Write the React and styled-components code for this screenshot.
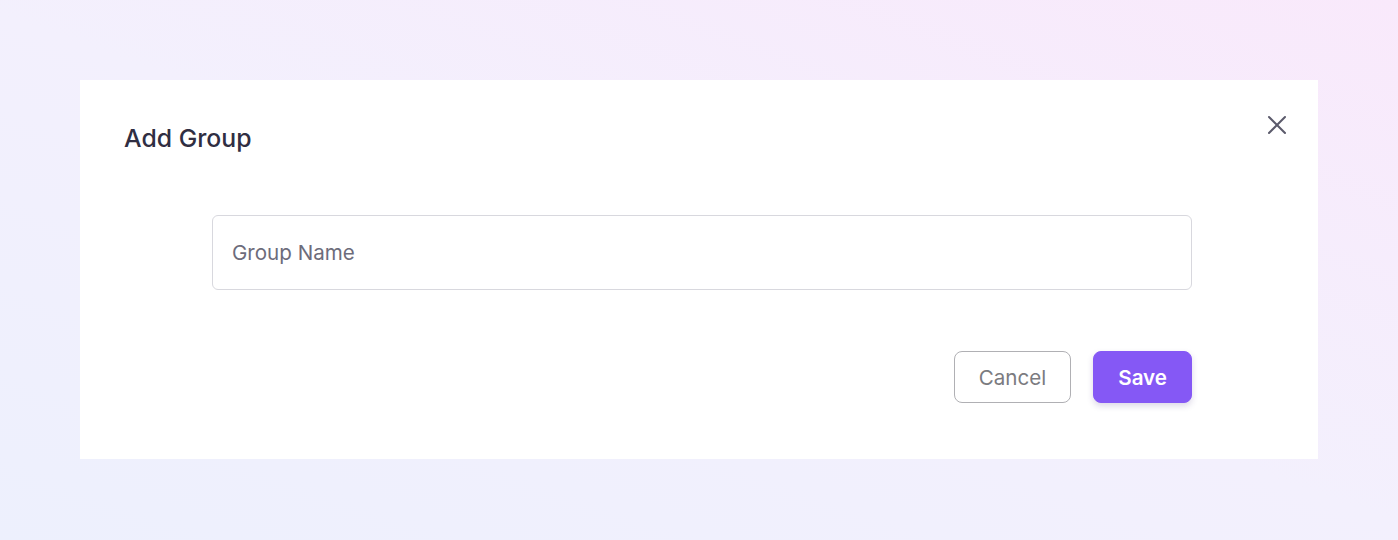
import React from 'react'
import styled, { createGlobalStyle } from 'styled-components'

const Global = createGlobalStyle`
  html, body {
    margin: 0;
    padding: 0;
  }
  body {
    font-family: Inter, "Noto Sans", sans-serif;
    -webkit-font-smoothing: antialiased;
  }
  * {
    box-sizing: border-box;
  }
`

const Page = styled.div`
  width: 1398px;
  height: 540px;
  padding: 80px;
  background: linear-gradient(20deg, #edf0fd 0%, #f3f0fd 50%, #f9e9fb 100%);
`

const Modal = styled.div`
  position: relative;
  height: 379px;
  background: #ffffff;
  padding: 44px 0 0;
`

const Title = styled.h2`
  margin: 0 0 0 44px;
  font-size: 24.8px;
  font-weight: 500;
  line-height: 29px;
  color: #302e42;
`

const Close = styled.button`
  position: absolute;
  top: 29px;
  right: 25px;
  width: 32px;
  height: 32px;
  padding: 0;
  border: 0;
  background: none;
  color: #5b5a6b;
  cursor: pointer;
  display: flex;
  align-items: center;
  justify-content: center;
`

const Body = styled.div`
  width: 980px;
  margin: 62px 0 0 132px;
  display: flex;
  flex-direction: column;
`

const Input = styled.input`
  width: 100%;
  height: 75px;
  padding: 0 19px;
  border: 1px solid #d8d8de;
  border-radius: 6px;
  font-family: inherit;
  font-size: 20.6px;
  color: #2e2c40;
  outline: none;

  &::placeholder {
    color: #6d6c7b;
  }
`

const Actions = styled.div`
  display: flex;
  justify-content: flex-end;
  gap: 22px;
  margin-top: 61px;
`

const Button = styled.button`
  height: 52px;
  padding: 0 24px;
  border-radius: 8px;
  font-family: inherit;
  font-size: 20.6px;
  cursor: pointer;
  border: 1px solid ${p => (p.$primary ? '#8558f5' : '#b0b0b4')};
  background: ${p => (p.$primary ? '#8558f5' : '#ffffff')};
  color: ${p => (p.$primary ? '#ffffff' : '#7b7b80')};
  font-weight: ${p => (p.$primary ? 600 : 400)};
  box-shadow: ${p => (p.$primary ? '0 3px 6px rgba(60, 40, 120, 0.18)' : 'none')};
`

const XIcon = () => (
  <svg width="20" height="20" viewBox="0 0 20 20" fill="none" stroke="currentColor" strokeWidth="2" strokeLinecap="round">
    <path d="M2 2 18 18M18 2 2 18" />
  </svg>
)

export default function App () {
  return (
    <>
      <Global />
      <Page>
        <Modal>
          <Title>Add Group</Title>
          <Close aria-label='Close'>
            <XIcon />
          </Close>
          <Body>
            <Input placeholder='Group Name' />
            <Actions>
              <Button>Cancel</Button>
              <Button $primary>Save</Button>
            </Actions>
          </Body>
        </Modal>
      </Page>
    </>
  )
}
